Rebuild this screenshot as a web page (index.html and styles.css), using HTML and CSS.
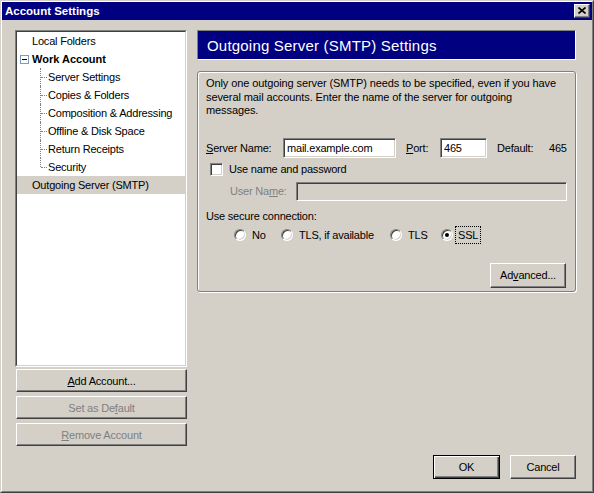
FILE: index.html
```html
<!DOCTYPE html>
<html>
<head>
<meta charset="utf-8">
<title>Account Settings</title>
<link rel="stylesheet" href="styles.css">
</head>
<body>
<div class="window">
  <div class="frame">
    <div class="titlebar">
      <span class="title">Account Settings</span>
      <span class="close"><svg width="8" height="7" viewBox="0 0 8 7"><path d="M0.5 0.5 L7.5 6.5 M7.5 0.5 L0.5 6.5" stroke="#000" stroke-width="1.6" fill="none"/></svg></span>
    </div>
    <div class="body">
      <div class="left">
        <div class="tree">
          <div class="tree-inner">
            <div class="row top">Local Folders</div>
            <div class="row parent"><span class="toggle"></span><b>Work Account</b></div>
            <div class="row child">Server Settings</div>
            <div class="row child">Copies &amp; Folders</div>
            <div class="row child">Composition &amp; Addressing</div>
            <div class="row child">Offline &amp; Disk Space</div>
            <div class="row child">Return Receipts</div>
            <div class="row child last">Security</div>
            <div class="row top selected">Outgoing Server (SMTP)</div>
          </div>
        </div>
        <div class="btn side first"><span><u>A</u>dd Account...</span></div>
        <div class="btn side disabled"><span>Set as De<u>f</u>ault</span></div>
        <div class="btn side disabled"><span><u>R</u>emove Account</span></div>
      </div>
      <div class="right">
        <div class="header">Outgoing Server (SMTP) Settings</div>
        <div class="group">
          <p class="desc">Only one outgoing server (SMTP) needs to be specified, even if you have several mail accounts. Enter the name of the server for outgoing messages.</p>
          <div class="server-row">
            <span class="lbl-server"><u>S</u>erver Name:</span>
            <span class="input server-input">mail.example.com</span>
            <span class="lbl-port"><u>P</u>ort:</span>
            <span class="input port-input">465</span>
            <span class="lbl-default">Default:</span>
            <span class="default-val">465</span>
          </div>
          <div class="check-row">
            <span class="checkbox"></span>
            <span class="check-label">Use name and password</span>
          </div>
          <div class="user-row">
            <span class="lbl-user">User Na<u>m</u>e:</span>
            <span class="input user-input"></span>
          </div>
          <div class="secure-label">Use secure connection:</div>
          <div class="radio-row">
            <span class="opt opt-no"><span class="radio"></span><span class="opt-text">No</span></span>
            <span class="opt opt-tlsa"><span class="radio"></span><span class="opt-text">TLS, if available</span></span>
            <span class="opt opt-tls"><span class="radio"></span><span class="opt-text">TLS</span></span>
            <span class="opt opt-ssl"><span class="radio checked"></span><span class="focus">SSL</span></span>
          </div>
          <div class="adv-row">
            <div class="btn adv"><span>Ad<u>v</u>anced...</span></div>
          </div>
        </div>
        <div class="footer">
          <div class="btn default ok"><span>OK</span></div>
          <div class="btn cancel"><span>Cancel</span></div>
        </div>
      </div>
    </div>
  </div>
</div>
</body>
</html>
```
FILE: styles.css
```css
html, body {
  margin: 0;
  padding: 0;
  background: #D4D0C8;
}
body {
  font-family: "Liberation Sans", Arial, sans-serif;
  font-size: 11px;
  letter-spacing: -0.2px;
  color: #000;
}
u { text-decoration: underline; text-underline-offset: 1px; }

.window {
  width: 594px;
  height: 493px;
  box-sizing: border-box;
  border: 1px solid;
  border-color: #D4D0C8 #404040 #404040 #D4D0C8;
}
.frame {
  height: 100%;
  box-sizing: border-box;
  border: 1px solid;
  border-color: #fff #808080 #808080 #fff;
  display: flex;
  flex-direction: column;
}
.titlebar {
  height: 18px;
  flex: none;
  background: #000080;
  color: #fff;
  display: flex;
  align-items: center;
  justify-content: space-between;
  padding: 0 2px 0 3px;
}
.title {
  font-weight: bold;
  font-size: 11.5px;
  letter-spacing: 0;
}
.close {
  width: 16px;
  height: 14px;
  box-sizing: border-box;
  background: #D4D0C8;
  border: 1px solid;
  border-color: #fff #404040 #404040 #fff;
  box-shadow: inset -1px -1px #808080;
  display: flex;
  align-items: center;
  justify-content: center;
  padding: 0 1px 1px 0;
}
.close svg { display: block; }

.body {
  flex: 1;
  min-height: 0;
  display: flex;
  gap: 10px;
  padding: 10px 16px 12px 13px;
}

/* left column */
.left {
  width: 172px;
  display: flex;
  flex-direction: column;
}
.tree {
  height: 337px;
  box-sizing: border-box;
  border: 1px solid;
  border-color: #808080 #fff #fff #808080;
}
.tree-inner {
  height: 100%;
  box-sizing: border-box;
  border: 1px solid;
  border-color: #404040 #D4D0C8 #D4D0C8 #404040;
  background: #fff;
}
.row {
  height: 18px;
  display: flex;
  align-items: center;
  white-space: nowrap;
  position: relative;
}
.row.top { padding-left: 15px; }
.row.parent { padding-left: 3px; }
.row.parent b { letter-spacing: 0; }
.row.selected { background: #D4D0C8; }
.toggle {
  width: 9px;
  height: 9px;
  box-sizing: border-box;
  border: 1px solid #7B9EBD;
  background: #fff;
  margin-right: 3px;
  display: flex;
  align-items: center;
  justify-content: center;
}
.toggle::after {
  content: "";
  width: 5px;
  height: 1px;
  background: #000;
}
.row.child { padding-left: 31px; }
.row.child::before {
  content: "";
  position: absolute;
  left: 23px;
  top: 0;
  height: 18px;
  border-left: 1px dotted #808080;
}
.row.child.last::before { height: 9px; }
.row.child::after {
  content: "";
  position: absolute;
  left: 24px;
  top: 9px;
  width: 6px;
  border-top: 1px dotted #808080;
}

.btn {
  box-sizing: border-box;
  background: #D4D0C8;
  border: 1px solid;
  border-color: #fff #404040 #404040 #fff;
  box-shadow: inset -1px -1px #808080;
  display: flex;
  align-items: center;
  justify-content: center;
  white-space: nowrap;
}
.btn.side {
  height: 23px;
  margin-top: 4px;
  margin-left: 1px;
}
.btn.side.first { margin-top: 2px; }
.btn.disabled { color: #808080; }

/* right column */
.right {
  width: 379px;
  display: flex;
  flex-direction: column;
}
.header {
  height: 30px;
  flex: none;
  box-sizing: border-box;
  border: 1px solid;
  border-color: #808080 #fff #fff #808080;
  background: #000080;
  color: #fff;
  font-size: 15px;
  letter-spacing: 0.2px;
  padding-left: 9px;
  display: flex;
  align-items: center;
}
.group {
  margin-top: 11px;
  box-sizing: border-box;
  border: 1px solid #808080;
  border-radius: 3px;
  box-shadow: inset 1px 1px #fff, 1px 1px #fff;
  padding: 5px 8px 3px 8px;
  display: flex;
  flex-direction: column;
}
.desc {
  margin: 0;
  max-width: 356px;
  letter-spacing: -0.1px;
  line-height: 13.5px;
}
.input {
  box-sizing: border-box;
  border: 1px solid;
  border-color: #808080 #fff #fff #808080;
  box-shadow: inset 1px 1px #404040, inset -1px -1px #D4D0C8;
  background: #fff;
  padding-left: 3px;
  display: flex;
  align-items: center;
  white-space: nowrap;
}
.server-row {
  margin-top: 20px;
  height: 20px;
  display: flex;
  align-items: center;
}
.server-row > span { flex: none; }
.lbl-server { width: 77px; }
.server-input { width: 113px; height: 20px; }
.lbl-port { margin-left: 10px; width: 34px; }
.port-input { width: 47px; height: 20px; }
.lbl-default { margin-left: 10px; width: 52px; }

.check-row {
  margin-top: 5px;
  height: 13px;
  display: flex;
  align-items: center;
}
.checkbox {
  width: 13px;
  height: 13px;
  box-sizing: border-box;
  margin-left: 4px;
  border: 1px solid;
  border-color: #808080 #fff #fff #808080;
  box-shadow: inset 1px 1px #404040, inset -1px -1px #D4D0C8;
  background: #fff;
}
.check-label { margin-left: 6px; }

.user-row {
  margin-top: 6px;
  height: 19px;
  display: flex;
  align-items: center;
}
.lbl-user {
  margin-left: 24px;
  width: 66px;
  color: #808080;
}
.user-input {
  width: 271px;
  height: 19px;
  background: #D4D0C8;
}

.secure-label {
  margin-top: 8px;
  line-height: 14px;
}
.radio-row {
  margin-top: 6px;
  height: 13px;
  padding-left: 28px;
  display: flex;
  align-items: center;
}
.opt {
  display: flex;
  align-items: center;
  white-space: nowrap;
}
.opt-no { width: 47px; }
.opt-tlsa { width: 109px; }
.opt-tls { width: 51px; }
.opt-text { margin-left: 6px; }
.radio {
  width: 12px;
  height: 12px;
  box-sizing: border-box;
  border-radius: 50%;
  border: 1px solid;
  border-color: #808080 #fff #fff #808080;
  box-shadow: inset 1px 1px #404040, inset -1px -1px #D4D0C8;
  background: #fff;
  display: flex;
  align-items: center;
  justify-content: center;
}
.radio.checked::after {
  content: "";
  width: 4px;
  height: 4px;
  border-radius: 50%;
  background: #000;
}
.focus {
  margin-left: 2px;
  padding: 2px 2px 2px 2px;
  border: 1px dotted #000;
  line-height: 12px;
}

.adv-row {
  margin-top: 21px;
  display: flex;
  justify-content: flex-end;
}
.btn.adv {
  width: 76px;
  height: 25px;
  margin-right: 1px;
}

.footer {
  margin-top: auto;
  display: flex;
  justify-content: flex-end;
  gap: 10px;
}
.btn.ok {
  width: 67px;
  height: 24px;
  border: 1px solid #000;
  box-shadow: inset 1px 1px #fff, inset -1px -1px #404040, inset -2px -2px #808080;
}
.btn.cancel {
  width: 66px;
  height: 24px;
}
```
